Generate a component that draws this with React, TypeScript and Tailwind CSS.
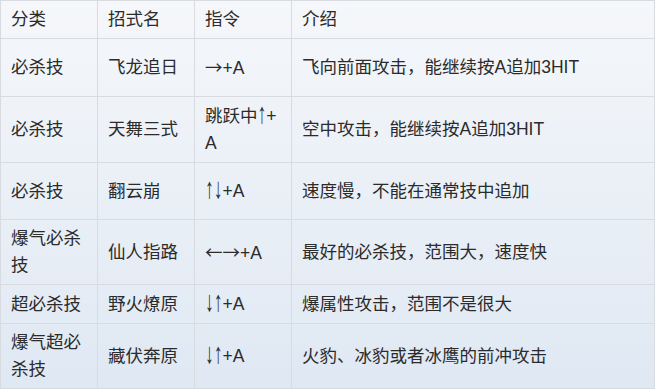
const rows = [
  { h: "h-[58px]", type: "必杀技", name: "飞龙追日", cmd: "→+A", desc: "飞向前面攻击，能继续按A追加3HIT" },
  { h: "h-[66px]", type: "必杀技", name: "天舞三式", cmd: "跳跃中↑+\nA", desc: "空中攻击，能继续按A追加3HIT" },
  { h: "h-[57px]", type: "必杀技", name: "翻云崩", cmd: "↑↓+A", desc: "速度慢，不能在通常技中追加" },
  { h: "h-[65px]", type: "爆气必杀\n技", name: "仙人指路", cmd: "←→+A", desc: "最好的必杀技，范围大，速度快" },
  { h: "h-[39px]", type: "超必杀技", name: "野火燎原", cmd: "↓↑+A", desc: "爆属性攻击，范围不是很大" },
  { h: "h-[65px]", type: "爆气超必\n杀技", name: "藏伏奔原", cmd: "↓↑+A", desc: "火豹、冰豹或者冰鹰的前冲攻击" },
];

const cell = "border border-[#d8dbe0] px-[10px] py-0 align-middle whitespace-pre";

// arrows: the vertical ones are narrow and tall, the horizontal ones long and thin
function Command({ text }: { text: string }) {
  return (
    <>
      {Array.from(text).map((ch, i) => {
        if (ch === "↑" || ch === "↓")
          return (
            <span key={i} className="inline-block scale-y-[1.65] origin-[50%_85%] translate-y-[4px]">
              {ch}
            </span>
          );
        if (ch === "←" || ch === "→")
          return (
            <span key={i} className="font-['Noto_Sans_CJK_SC',sans-serif]">
              {ch}
            </span>
          );
        return <span key={i}>{ch}</span>;
      })}
    </>
  );
}

export default function App() {
  return (
    <div className="w-[659px] h-[390px] bg-white font-['Liberation_Sans','Noto_Sans_CJK_SC',sans-serif] text-[17.5px] leading-[27px] text-[#2b2b2b]">
      <table className="table-fixed border-collapse w-[655px] bg-linear-to-b from-[#f5f7fa] to-[#dfe8f3]">
        <colgroup>
          <col className="w-[97px]" />
          <col className="w-[97px]" />
          <col className="w-[97px]" />
          <col />
        </colgroup>
        <thead>
          <tr className="h-[38px] text-left">
            <th className={`${cell} font-normal`}>分类</th>
            <th className={`${cell} font-normal`}>招式名</th>
            <th className={`${cell} font-normal`}>指令</th>
            <th className={`${cell} font-normal`}>介绍</th>
          </tr>
        </thead>
        <tbody>
          {rows.map((r, i) => (
            <tr key={i} className={r.h}>
              <td className={cell}>{r.type}</td>
              <td className={cell}>{r.name}</td>
              <td className={cell}>
                <Command text={r.cmd} />
              </td>
              <td className={cell}>{r.desc}</td>
            </tr>
          ))}
        </tbody>
      </table>
    </div>
  );
}
